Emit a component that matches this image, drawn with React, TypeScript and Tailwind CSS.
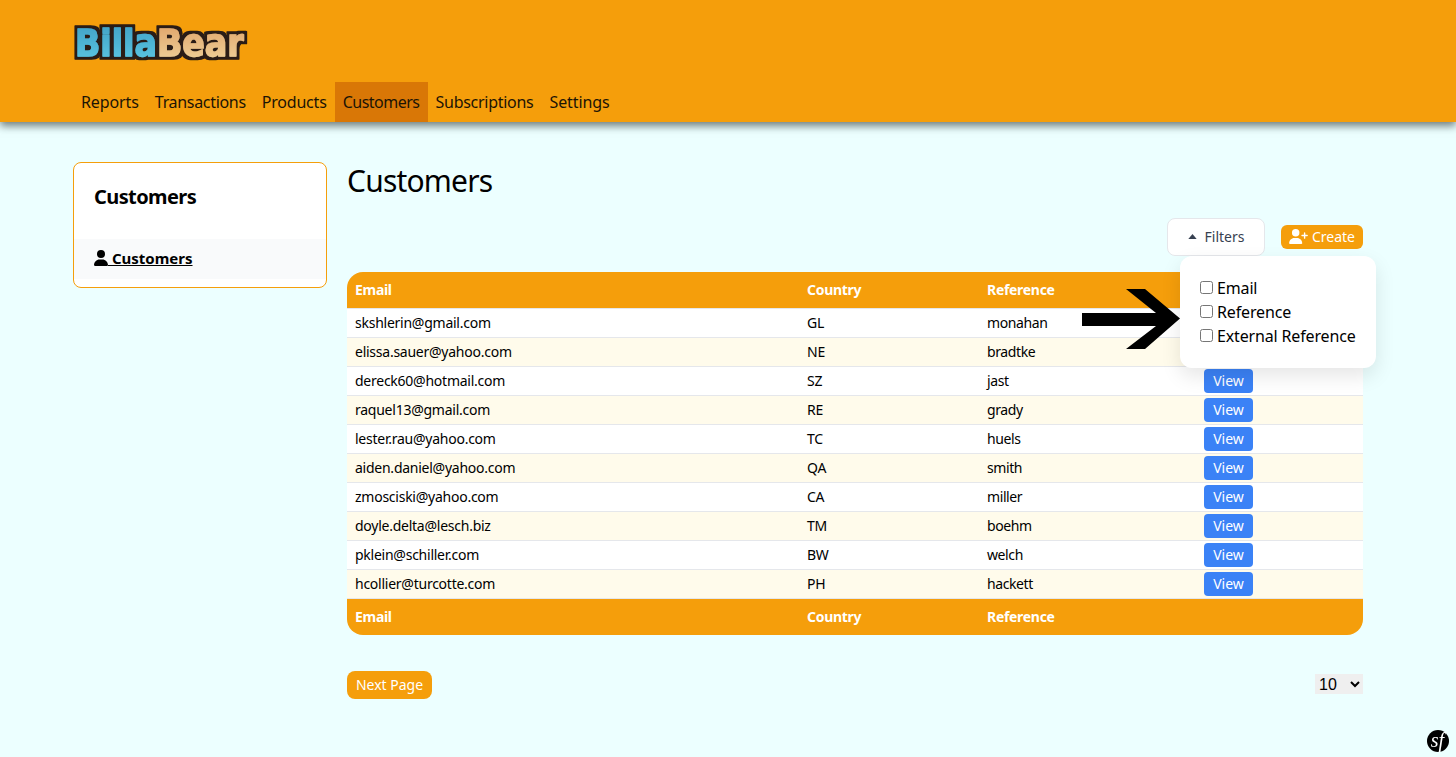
import { useState } from 'react';

const navItems = [
  { label: 'Reports', tracking: 'tracking-[-0.1px]' },
  { label: 'Transactions', tracking: 'tracking-[-0.32px]' },
  { label: 'Products', tracking: 'tracking-[-0.2px]' },
  { label: 'Customers', tracking: 'tracking-[-0.5px]' },
  { label: 'Subscriptions', tracking: 'tracking-[-0.28px]' },
  { label: 'Settings', tracking: 'tracking-[-0.1px]' },
];

const customers = [
  { email: 'skshlerin@gmail.com', country: 'GL', reference: 'monahan' },
  { email: 'elissa.sauer@yahoo.com', country: 'NE', reference: 'bradtke' },
  { email: 'dereck60@hotmail.com', country: 'SZ', reference: 'jast' },
  { email: 'raquel13@gmail.com', country: 'RE', reference: 'grady' },
  { email: 'lester.rau@yahoo.com', country: 'TC', reference: 'huels' },
  { email: 'aiden.daniel@yahoo.com', country: 'QA', reference: 'smith' },
  { email: 'zmosciski@yahoo.com', country: 'CA', reference: 'miller' },
  { email: 'doyle.delta@lesch.biz', country: 'TM', reference: 'boehm' },
  { email: 'pklein@schiller.com', country: 'BW', reference: 'welch' },
  { email: 'hcollier@turcotte.com', country: 'PH', reference: 'hackett' },
];

const filters = ['Email', 'Reference', 'External Reference'];

function Logo() {
  return (
    <svg width="180" height="46" viewBox="0 0 180 46" className="block">
      <defs>
        <linearGradient id="billa" x1="0" y1="0" x2="0" y2="1">
          <stop offset="0" stopColor="#3f9fc4" />
          <stop offset="1" stopColor="#5cc8e4" />
        </linearGradient>
        <linearGradient id="bear" x1="0" y1="0" x2="0" y2="1">
          <stop offset="0" stopColor="#dfa066" />
          <stop offset="1" stopColor="#f0d49c" />
        </linearGradient>
        <filter id="outline" x="-5%" y="-15%" width="110%" height="130%">
          <feMorphology in="SourceAlpha" operator="dilate" radius="3" result="fat" />
          <feFlood floodColor="#2a1d14" />
          <feComposite in2="fat" operator="in" result="edge" />
          <feMerge>
            <feMergeNode in="edge" />
            <feMergeNode in="SourceGraphic" />
          </feMerge>
        </filter>
      </defs>
      <g filter="url(#outline)">
        <text
          transform="translate(5 37) scale(0.875 1)"
          fontFamily="'DejaVu Sans', sans-serif"
          fontWeight="900"
          fontSize="38"
          strokeWidth="1.4"
          strokeLinejoin="round"
        >
          <tspan fill="url(#billa)" stroke="url(#billa)">Billa</tspan>
          <tspan fill="url(#bear)" stroke="url(#bear)">Bear</tspan>
        </text>
      </g>
    </svg>
  );
}

function UserIcon() {
  return (
    <svg viewBox="0 0 448 512" className="inline-block h-4 w-[14px] fill-current align-[-2px]">
      <path d="M224 256A128 128 0 1 0 224 0a128 128 0 1 0 0 256zm-45.7 48C79.8 304 0 383.8 0 482.3 0 498.7 13.3 512 29.7 512h388.6c16.4 0 29.7-13.3 29.7-29.7C448 383.8 368.2 304 269.7 304h-91.4z" />
    </svg>
  );
}

function UserPlusIcon() {
  return (
    <svg viewBox="0 0 640 512" className="h-[15px] w-[19px] fill-current">
      <path d="M96 128a128 128 0 1 1 256 0 128 128 0 1 1-256 0zM0 482.3C0 383.8 79.8 304 178.3 304h91.4C368.2 304 448 383.8 448 482.3c0 16.4-13.3 29.7-29.7 29.7H29.7C13.3 512 0 498.7 0 482.3zM504 312v-64h-64c-13.3 0-24-10.7-24-24s10.7-24 24-24h64v-64c0-13.3 10.7-24 24-24s24 10.7 24 24v64h64c13.3 0 24 10.7 24 24s-10.7 24-24 24h-64v64c0 13.300-10.700 24-24 24s-24-10.700-24-24z" />
    </svg>
  );
}

export default function App() {
  const [checked, setChecked] = useState<Record<string, boolean>>({});

  return (
    <div className="min-h-[757px] bg-[#ecffff] text-black [font-family:'Noto_Sans',sans-serif]">
      <header className="h-[122px] bg-[#f59e0b] shadow-[0_4px_8px_rgba(30,40,40,0.6)]">
        <div className="ml-[70px] mr-[73px] flex h-full flex-col justify-between">
          <div className="pt-[19px]">
            <Logo />
          </div>
          <nav className="ml-[3px] flex h-10">
            {navItems.map((item) => (
              <a
                key={item.label}
                href="#"
                className={`flex items-center px-2 text-[16px] text-[#1c1405] ${item.tracking} ${item.label === 'Customers' ? 'bg-[#d97706]' : ''}`}
              >
                {item.label}
              </a>
            ))}
          </nav>
        </div>
      </header>

      <main className="ml-[73px] mr-[93px] flex items-start gap-5 pt-10">
        <aside className="h-[126px] w-[254px] shrink-0 rounded-lg border border-[#f59e0b] bg-white">
          <h2 className="px-5 pt-5 text-[20px] leading-[28px] font-bold tracking-[-0.6px]">Customers</h2>
          <div className="mt-[28px] flex h-10 items-center bg-[#f9fafb] px-5 pb-[2px]">
            <a href="#" className="text-[15px] font-bold underline">
              <UserIcon /> Customers
            </a>
          </div>
        </aside>

        <section className="min-w-0 flex-1">
          <h1 className="pt-px text-[30px] leading-9 tracking-[-0.8px]">Customers</h1>

          <div className="relative mt-[19px] flex items-center justify-end gap-4">
            <button className="flex h-[38px] w-[98px] items-center justify-center gap-2 rounded-lg border border-gray-200 bg-white pb-[2px] text-[14px] text-[#374151]">
              <svg viewBox="0 0 10 6" className="h-[5px] w-[9px] fill-current">
                <path d="M5 0 10 6H0z" />
              </svg>
              Filters
            </button>
            <button className="flex h-6 w-[82px] items-center justify-center gap-1 rounded-md bg-[#f59e0b] pb-[1px] text-[14px] text-white">
              <UserPlusIcon />
              Create
            </button>

            <div className="absolute top-[38px] right-[-13px] z-20 h-[112px] w-[196px] rounded-xl bg-white px-5 pt-[20px] shadow-[0_8px_20px_rgba(0,0,0,0.1)]">
              {filters.map((label) => (
                <label key={label} className="flex h-6 items-center gap-1 whitespace-nowrap text-[16px] tracking-[-0.15px]">
                  <input
                    type="checkbox"
                    checked={!!checked[label]}
                    onChange={(e) => setChecked({ ...checked, [label]: e.target.checked })}
                    className="m-0 mb-[2px] h-[13px] w-[13px]"
                  />
                  {label}
                </label>
              ))}
            </div>

            <svg viewBox="0 0 98 60" className="absolute top-[71px] right-[183px] z-10 h-[60px] w-[98px]">
              <path d="M0 24H74L44 0H63L98 29.500 63 60H44L74 37H0z" fill="#000" />
            </svg>
          </div>

          <table className="mt-[16px] w-full table-fixed border-separate border-spacing-0 text-[14px] tracking-[-0.25px]">
            <thead>
              <tr className="h-[37px] bg-[#f59e0b] text-left text-white">
                <th className="w-[452px] rounded-tl-2xl border-b border-gray-200 px-2 pb-[2px] font-bold tracking-[-0.3px]">Email</th>
                <th className="w-[180px] border-b border-gray-200 px-2 pb-[2px] font-bold tracking-[-0.3px]">Country</th>
                <th className="w-[217px] border-b border-gray-200 px-2 pb-[2px] font-bold tracking-[-0.3px]">Reference</th>
                <th className="rounded-tr-2xl border-b border-gray-200 px-2"></th>
              </tr>
            </thead>
            <tbody>
              {customers.map((c, i) => (
                <tr key={c.email} className={`h-[29px] ${i % 2 === 0 ? 'bg-white' : 'bg-[#fffbeb]'}`}>
                  <td className="border-b border-gray-200 px-2 pb-[2px]">{c.email}</td>
                  <td className="border-b border-gray-200 px-2 pb-[2px]">{c.country}</td>
                  <td className="border-b border-gray-200 px-2 pb-[2px] tracking-[-0.4px]">{c.reference}</td>
                  <td className="border-b border-gray-200 px-2 pb-[1px]">
                    <a href="#" className="flex h-6 w-[49px] items-center justify-center rounded bg-[#3b82f6] pb-px tracking-normal text-white">View</a>
                  </td>
                </tr>
              ))}
            </tbody>
            <tfoot>
              <tr className="h-9 bg-[#f59e0b] text-left text-white">
                <th className="rounded-bl-2xl px-2 pb-[2px] font-bold tracking-[-0.3px]">Email</th>
                <th className="px-2 pb-[2px] font-bold tracking-[-0.3px]">Country</th>
                <th className="px-2 pb-[2px] font-bold tracking-[-0.3px]">Reference</th>
                <th className="rounded-br-2xl px-2"></th>
              </tr>
            </tfoot>
          </table>

          <div className="mt-9 flex items-center justify-between">
            <button className="h-7 w-[85px] rounded-lg bg-[#f59e0b] pb-[2px] text-[14px] text-white">Next Page</button>
            <select className="mb-[2px] h-5 w-12 bg-[#efefef] text-[16px] [font-family:'Liberation_Sans',sans-serif]" defaultValue="10">
              <option>10</option>
              <option>25</option>
              <option>50</option>
            </select>
          </div>
        </section>
      </main>

      <div className="fixed right-[7px] bottom-[5px] flex h-[22px] w-[22px] items-center justify-center rounded-full bg-black pb-[2px] pr-[1px] text-[20px] leading-none text-white italic [font-family:'Liberation_Serif',serif]">
        sf
      </div>
    </div>
  );
}
